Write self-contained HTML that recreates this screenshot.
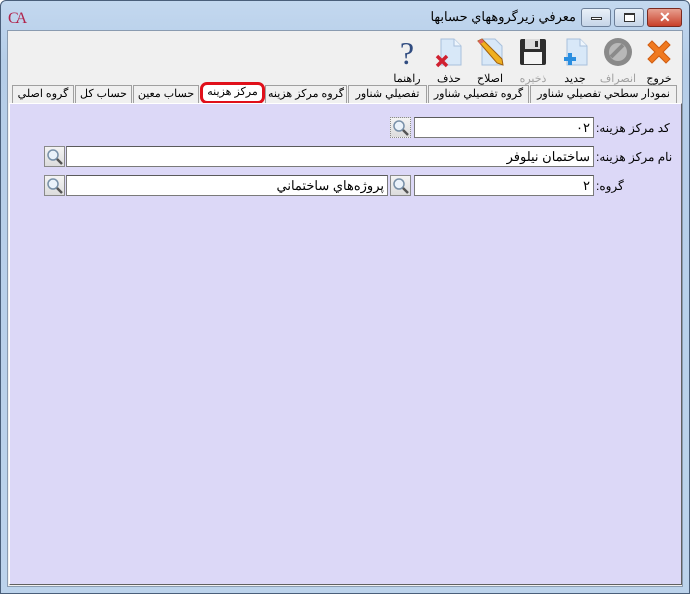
<!DOCTYPE html>
<html><head><meta charset="utf-8">
<style>
*{margin:0;padding:0;box-sizing:border-box}
body{width:690px;height:594px;overflow:hidden;background:#fff;font-family:"Liberation Sans","Noto Sans CJK SC",sans-serif;font-size:12px;position:relative}
.a{position:absolute}
.frame{left:0;top:0;width:690px;height:594px;background:linear-gradient(#c3d8ef,#b5cde8 60px,#bcd3ec);border:1px solid #4a5f7a;border-radius:6px 6px 0 0}
.client{left:7px;top:30px;width:676px;height:557px;background:#f0f0f0;border:1px solid #8a9bb0}
.title{right:114px;top:9px;font-size:13px;color:#000;direction:rtl;white-space:nowrap}
.btn{top:8px;height:19px;border:1px solid #6c7f99;border-radius:3px;background:linear-gradient(#e9f0f8,#c6d5e8)}
.tb{top:36px;width:40px;text-align:center;font-size:11px}
.tb svg{display:block;margin:0 auto}
.tb span{display:block;margin-top:4px;direction:rtl}
.tabs{left:9px;top:85px;width:672px;height:19px}
.tab{position:absolute;top:0;height:18px;border:1px solid #a0a0a0;border-bottom:none;background:#f0f0f0;font-size:11px;text-align:center;line-height:16px;direction:rtl;white-space:nowrap}
.panel{left:9px;top:103px;width:673px;height:482px;background:#dcd8f7;border-top:1px solid #fff;border-left:1px solid #fff;border-right:1px solid #606060;border-bottom:1px solid #606060}
.inp{height:21px;background:#fff;border:1px solid #7a7a7a;border-top-color:#5a5a5a;font-size:13px;direction:rtl;padding-right:3px;line-height:19px}
.sb{width:21px;height:21px;background:linear-gradient(#f4f4f4,#dcdcdc);border:1px solid #8a8a8a}
.lbl{font-size:12px;direction:rtl;text-align:right;white-space:nowrap}
</style></head><body>
<div class="a frame"></div>
<div class="a" style="left:8px;top:10px;color:#b0244c;font-family:'Liberation Serif',serif;font-size:16px;letter-spacing:-3px">CA</div>
<div class="a title">معرفي زيرگروههاي حسابها</div>
<div class="a btn" style="left:581px;width:30px"><div class="a" style="left:9px;top:8px;width:11px;height:3px;border:1px solid #333;background:#fff"></div></div>
<div class="a btn" style="left:614px;width:30px"><div class="a" style="left:9px;top:4px;width:11px;height:9px;border:1px solid #333;border-top-width:2px;background:#fff"></div></div>
<div class="a btn" style="left:647px;width:35px;background:linear-gradient(#e8a090,#c8402a);border-color:#7a2a20"><div class="a" style="left:11px;top:0;color:#fff;font-weight:bold;font-size:14px">✕</div></div>
<div class="a client"></div>

<!-- toolbar -->
<div class="a tb" style="left:639px"><svg width="32" height="32" viewBox="0 0 32 32"><path d="M5 9 L9 5 L16 12 L23 5 L27 9 L20 16 L27 23 L23 27 L16 20 L9 27 L5 23 L12 16Z" fill="#f07a20" stroke="#d05c10"/></svg><span>خروج</span></div>
<div class="a tb" style="left:598px;color:#a0a0a0"><svg width="32" height="32" viewBox="0 0 32 32"><circle cx="16" cy="16" r="14" fill="#8a8a8a"/><circle cx="16" cy="16" r="9" fill="#b8b8b8"/><path d="M9 21 L21 9" stroke="#8a8a8a" stroke-width="4"/></svg><span>انصراف</span></div>
<div class="a tb" style="left:555px"><svg width="32" height="32" viewBox="0 0 32 32"><path d="M8 3 H21 L28 10 V29 H8Z" fill="#d8e8f8" stroke="#a8c0dc"/><path d="M21 3 V10 H28" fill="#eef5fc" stroke="#a8c0dc"/><path d="M5 21 h4 v-4 h4 v4 h4 v4 h-4 v4 h-4 v-4 h-4z" fill="#2a8ee0"/></svg><span>جديد</span></div>
<div class="a tb" style="left:513px;color:#a0a0a0"><svg width="32" height="32" viewBox="0 0 32 32"><rect x="3" y="3" width="26" height="26" rx="2" fill="#2e2e2e"/><rect x="8" y="3" width="15" height="10" fill="#dcdcdc"/><rect x="18" y="5" width="3" height="6" fill="#2e2e2e"/><rect x="7" y="16" width="18" height="12" fill="#f4f4f4"/></svg><span>ذخيره</span></div>
<div class="a tb" style="left:470px"><svg width="32" height="32" viewBox="0 0 32 32"><path d="M8 3 H21 L28 10 V29 H8Z" fill="#d8e8f8" stroke="#a8c0dc"/><path d="M4 5 L8 3 L28 23 L29 29 L23 27 Z" fill="#f0b020" stroke="#a06010"/><path d="M4 5 L8 3 L10 6 L6 8Z" fill="#e06060"/></svg><span>اصلاح</span></div>
<div class="a tb" style="left:429px"><svg width="32" height="32" viewBox="0 0 32 32"><path d="M8 3 H21 L28 10 V29 H8Z" fill="#d8e8f8" stroke="#a8c0dc"/><path d="M21 3 V10 H28" fill="#eef5fc" stroke="#a8c0dc"/><path d="M4 20 L14 30 M14 20 L4 30" stroke="#d02030" stroke-width="3.5"/></svg><span>حذف</span></div>
<div class="a tb" style="left:387px"><svg width="32" height="32" viewBox="0 0 32 32"><text x="16" y="28" text-anchor="middle" font-family="Liberation Serif" font-size="32" fill="#304c80">?</text></svg><span>راهنما</span></div>

<!-- tabs -->
<div class="a tabs">
<div class="tab" style="left:521px;width:147px">نمودار سطحي تفصيلي شناور</div>
<div class="tab" style="left:419px;width:101px">گروه تفصيلي شناور</div>
<div class="tab" style="left:339px;width:79px">تفصيلي شناور</div>
<div class="tab" style="left:256px;width:82px">گروه مركز هزينه</div>
<div class="tab" style="left:191px;top:-3px;height:22px;width:65px;border:3px solid #e0101a;border-radius:7px;background:#fff;line-height:15px">مركز هزينه</div>
<div class="tab" style="left:124px;width:66px">حساب معين</div>
<div class="tab" style="left:66px;width:57px">حساب كل</div>
<div class="tab" style="left:3px;width:62px">گروه اصلي</div>
</div>

<div class="a panel"></div>

<!-- row1 -->
<div class="a lbl" style="left:596px;top:121px">كد مركز هزينه:</div>
<div class="a inp" style="left:414px;top:117px;width:180px">٠٢</div>
<div class="a sb" style="left:390px;top:117px;border-style:dotted"><svg width="19" height="19"><circle cx="8" cy="8" r="5" fill="#eaf2fa" stroke="#7890a8" stroke-width="1.5"/><path d="M12 12 L17 17" stroke="#555" stroke-width="2.5"/></svg></div>
<!-- row2 -->
<div class="a lbl" style="left:596px;top:150px">نام مركز هزينه:</div>
<div class="a inp" style="left:66px;top:146px;width:528px">ساختمان نيلوفر</div>
<div class="a sb" style="left:44px;top:146px"><svg width="19" height="19"><circle cx="8" cy="8" r="5" fill="#eaf2fa" stroke="#7890a8" stroke-width="1.5"/><path d="M12 12 L17 17" stroke="#555" stroke-width="2.5"/></svg></div>
<!-- row3 -->
<div class="a lbl" style="left:596px;top:179px">گروه:</div>
<div class="a inp" style="left:414px;top:175px;width:180px">٢</div>
<div class="a sb" style="left:390px;top:175px"><svg width="19" height="19"><circle cx="8" cy="8" r="5" fill="#eaf2fa" stroke="#7890a8" stroke-width="1.5"/><path d="M12 12 L17 17" stroke="#555" stroke-width="2.5"/></svg></div>
<div class="a inp" style="left:66px;top:175px;width:322px">پروژه‌هاي ساختماني</div>
<div class="a sb" style="left:44px;top:175px"><svg width="19" height="19"><circle cx="8" cy="8" r="5" fill="#eaf2fa" stroke="#7890a8" stroke-width="1.5"/><path d="M12 12 L17 17" stroke="#555" stroke-width="2.5"/></svg></div>
</body></html>
